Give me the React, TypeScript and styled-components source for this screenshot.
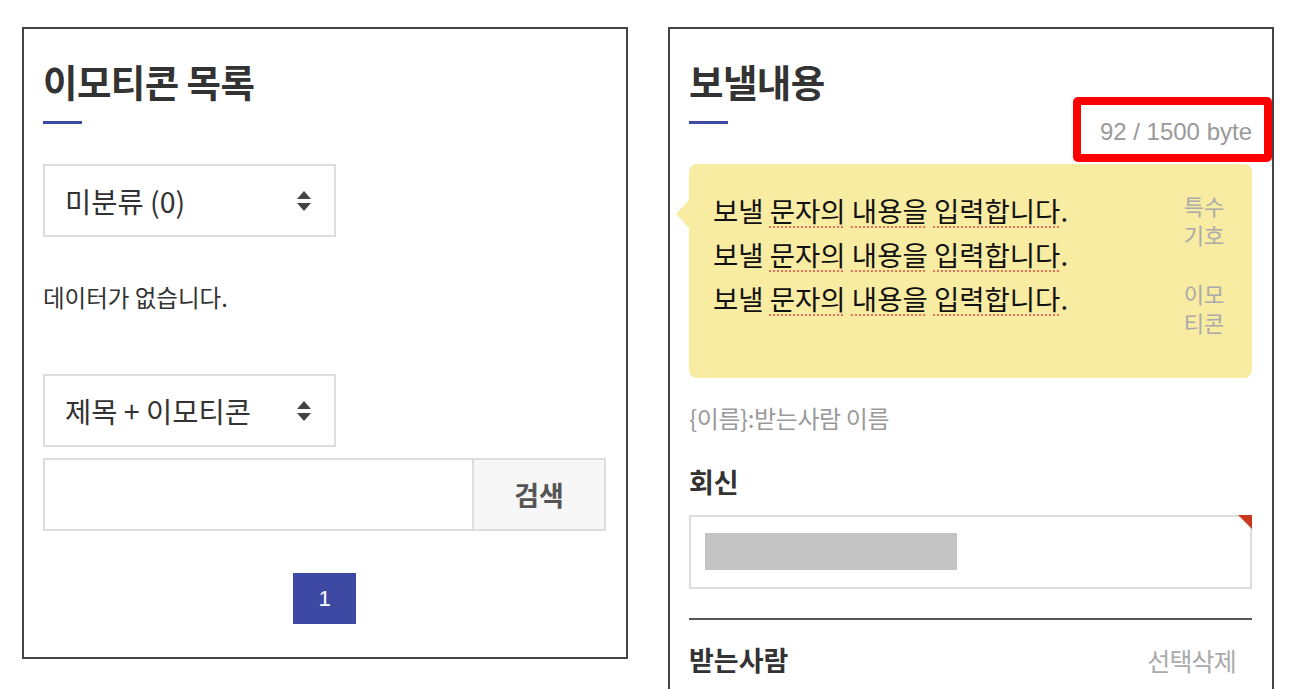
import React from "react"
import styled, { createGlobalStyle } from "styled-components"

const GlobalStyle = createGlobalStyle`
  html, body {
    margin: 0;
    padding: 0;
    background: #fff;
    overflow: hidden;
  }
  body {
    font-family: "Noto Sans CJK KR", "Noto Sans", sans-serif;
    color: #333;
  }
`

const Page = styled.div`
  display: flex;
  align-items: flex-start;
  gap: 40px;
  padding: 27px 0 0 22px;
`

const Panel = styled.section<{ $tall?: boolean }>`
  width: 606px;
  box-sizing: border-box;
  border: 2px solid #444;
  padding: 30px 20px ${(p) => (p.$tall ? "120px" : "33px")} 19px;
  display: flex;
  flex-direction: column;
`

const Title = styled.h2`
  margin: 0;
  font-size: 37.5px;
  line-height: 44px;
  font-weight: 700;
  color: #333;
  letter-spacing: -0.6px;
`

const Underline = styled.div`
  width: 39px;
  height: 3px;
  background: #3d49a3;
  margin-top: 18px;
`

const SelectBox = styled.div<{ $top: number }>`
  margin-top: ${(p) => p.$top}px;
  width: 293px;
  height: 73px;
  box-sizing: border-box;
  border: 2px solid #ddd;
  padding: 0 22px 0 20px;
  display: flex;
  align-items: center;
  justify-content: space-between;
  font-size: 28.5px;
  color: #333;
`

const Empty = styled.p`
  margin: 46px 0 0;
  font-size: 23.5px;
  line-height: 28px;
  color: #333;
`

const SearchRow = styled.div`
  margin-top: 11px;
  height: 73px;
  box-sizing: border-box;
  border: 2px solid #ddd;
  display: flex;
`

const SearchInput = styled.div`
  flex: 1;
`

const SearchButton = styled.div`
  width: 130px;
  border-left: 2px solid #ddd;
  background: #f7f7f7;
  display: flex;
  align-items: center;
  justify-content: center;
  font-size: 27px;
  font-weight: 700;
  color: #555;
`

const Pager = styled.div`
  margin-top: 42px;
  display: flex;
  justify-content: center;
`

const PageNum = styled.div`
  width: 63px;
  height: 51px;
  background: #3d49a3;
  color: #fff;
  display: flex;
  align-items: center;
  justify-content: center;
  font-family: "Liberation Sans", Arial, sans-serif;
  font-size: 22px;
`

const HeadRow = styled.div`
  display: flex;
  justify-content: space-between;
  align-items: flex-start;
  margin-top: 15px;
  ${Underline} {
    margin-top: 3px;
  }
`

const Counter = styled.span`
  position: relative;
  font-family: "Liberation Sans", Arial, sans-serif;
  font-size: 24px;
  line-height: 28px;
  color: #999;
  &::after {
    content: "";
    position: absolute;
    top: -21px;
    bottom: -16px;
    left: -27px;
    right: -20px;
    border: 8px solid #ff0000;
    border-radius: 5px;
  }
`

const Bubble = styled.div`
  position: relative;
  margin-top: 18px;
  height: 214px;
  box-sizing: border-box;
  background: #f8eba2;
  border-radius: 8px;
  padding: 24px 27px 0 24px;
  display: flex;
  justify-content: space-between;
  &::before {
    content: "";
    position: absolute;
    left: -13px;
    top: 36px;
    border-top: 14px solid transparent;
    border-bottom: 14px solid transparent;
    border-right: 13px solid #f8eba2;
  }
`

const Message = styled.div`
  font-size: 27.5px;
  line-height: 44px;
  color: #111;
`

const Spell = styled.span`
  text-decoration: underline dotted #e8735a;
  text-decoration-thickness: 2px;
  text-underline-offset: 4px;
`

const Tools = styled.div`
  display: flex;
  flex-direction: column;
  gap: 30px;
  margin-top: 3px;
`

const Tool = styled.div`
  width: 42px;
  font-size: 22px;
  line-height: 29px;
  color: #aaa;
  text-align: center;
`

const Hint = styled.p`
  margin: 26px 0 0;
  font-size: 24px;
  line-height: 28px;
  color: #999;
  letter-spacing: -0.4px;
`

const Label = styled.h3<{ $top: number }>`
  margin: ${(p) => p.$top}px 0 0;
  font-size: 27px;
  line-height: 32px;
  font-weight: 700;
  color: #333;
`

const ReplyInput = styled.div`
  position: relative;
  margin-top: 17px;
  height: 74px;
  box-sizing: border-box;
  border: 2px solid #ddd;
  padding: 16px 14px;
  &::after {
    content: "";
    position: absolute;
    top: -2px;
    right: -2px;
    border-top: 14px solid #c8381e;
    border-left: 14px solid transparent;
  }
`

const Masked = styled.div`
  width: 252px;
  height: 37px;
  background: #c4c4c4;
`

const Divider = styled.hr`
  margin: 29px 0 0;
  border: none;
  height: 2px;
  background: #555;
`

const RecipientRow = styled.div`
  display: flex;
  justify-content: space-between;
  align-items: center;
  margin-top: 22px;
  padding-right: 16px;
`

const LinkText = styled.span`
  font-size: 25px;
  color: #aaa;
  letter-spacing: -0.8px;
`

const SortArrows = () => (
  <svg width="16" height="22" viewBox="0 0 16 22">
    <path d="M8 1 L15 9 L1 9 Z" fill="#444" />
    <path d="M1 13 L15 13 L8 21 Z" fill="#444" />
  </svg>
)

const lines = [0, 1, 2]

export default function App() {
  return (
    <>
      <GlobalStyle />
      <Page>
        <Panel>
          <Title>이모티콘 목록</Title>
          <Underline />
          <SelectBox $top={40}>
            <span>미분류 (0)</span>
            <SortArrows />
          </SelectBox>
          <Empty>데이터가 없습니다.</Empty>
          <SelectBox $top={63}>
            <span>제목 + 이모티콘</span>
            <SortArrows />
          </SelectBox>
          <SearchRow>
            <SearchInput />
            <SearchButton>검색</SearchButton>
          </SearchRow>
          <Pager>
            <PageNum>1</PageNum>
          </Pager>
        </Panel>

        <Panel $tall>
          <Title>보낼내용</Title>
          <HeadRow>
            <Underline />
            <Counter>92 / 1500 byte</Counter>
          </HeadRow>
          <Bubble>
            <Message>
              {lines.map((i) => (
                <div key={i}>
                  보낼 <Spell>문자의</Spell> <Spell>내용을</Spell>{" "}
                  <Spell>입력합니다</Spell>.
                </div>
              ))}
            </Message>
            <Tools>
              <Tool>특수 기호</Tool>
              <Tool>이모 티콘</Tool>
            </Tools>
          </Bubble>
          <Hint>{"{이름}"}:받는사람 이름</Hint>
          <Label $top={34}>회신</Label>
          <ReplyInput>
            <Masked />
          </ReplyInput>
          <Divider />
          <RecipientRow>
            <Label $top={0}>받는사람</Label>
            <LinkText>선택삭제</LinkText>
          </RecipientRow>
        </Panel>
      </Page>
    </>
  )
}
